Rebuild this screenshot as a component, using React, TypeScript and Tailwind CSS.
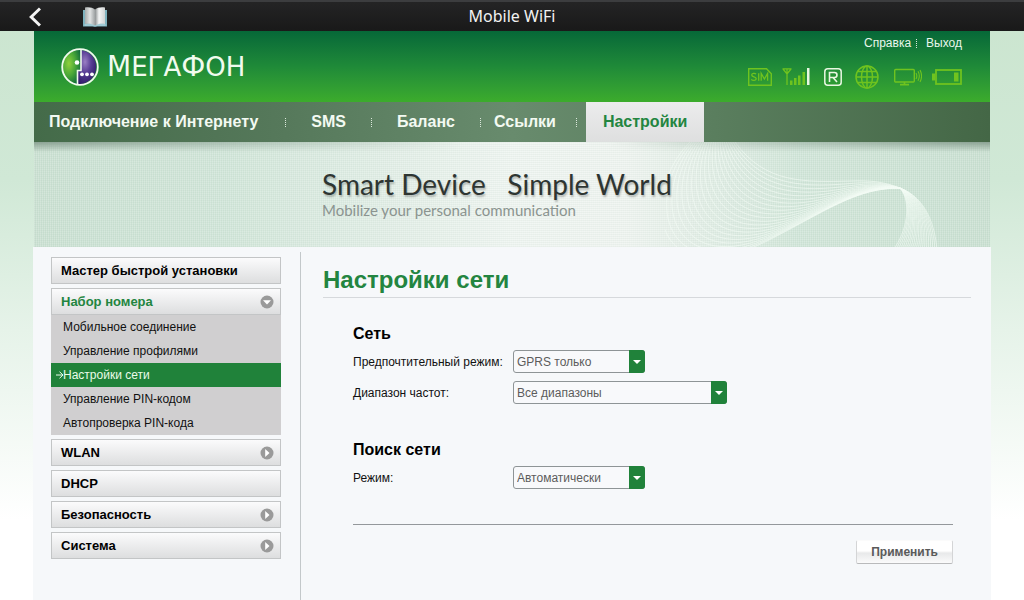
import { useId } from "react";

const sans = "font-['Liberation_Sans',Arial,sans-serif]";

function Separator() {
  return (
    <span
      aria-hidden="true"
      className="h-[9px] w-px bg-[repeating-linear-gradient(to_bottom,#dce8dc_0px,#dce8dc_1px,transparent_1px,transparent_2px)]"
    />
  );
}

function BackIcon() {
  return (
    <svg viewBox="0 0 12 20" className="h-5 w-3" fill="none" stroke="#f4f4f4" strokeWidth="3">
      <path d="M11 1.5 2.2 10 11 18.5" />
    </svg>
  );
}

function BookIcon() {
  return (
    <svg viewBox="0 0 24 20" className="h-5 w-6">
      <defs>
        <linearGradient id="pageLeft" x1="0" x2="1">
          <stop offset="0" stopColor="#a9adad" />
          <stop offset="0.5" stopColor="#e2e4e4" />
          <stop offset="1" stopColor="#9fa3a4" />
        </linearGradient>
        <linearGradient id="pageRight" x1="0" x2="1">
          <stop offset="0" stopColor="#8d9192" />
          <stop offset="0.4" stopColor="#f4f5f5" />
          <stop offset="1" stopColor="#d0d3d3" />
        </linearGradient>
      </defs>
      <path d="M0 3h24v16.500H14.500l-2.500.5-2.500-.5H0z" fill="#7fb3bf" />
      <path d="M1.500 17.500h21v1h-21z" fill="#c4e3ea" />
      <path d="M2 .5c4-.7 7.500 0 10 2v16c-2.500-1.600-6-2-10-1.500z" fill="url(#pageLeft)" />
      <path d="M22 .5c-4-.7-7.500 0-10 2v16c2.500-1.600 6-2 10-1.500z" fill="url(#pageRight)" />
    </svg>
  );
}

function Logo() {
  return (
    <a href="#home" className="flex items-center gap-2 text-[#f1fbee]">
      <svg viewBox="0 0 38 38" className="h-[38px] w-[38px]" aria-hidden="true">
        <defs>
          <radialGradient id="logoGreen" cx="0.35" cy="0.4" r="0.7">
            <stop offset="0" stopColor="#8fd03c" />
            <stop offset="0.5" stopColor="#4aa838" />
            <stop offset="1" stopColor="#0e6a3a" />
          </radialGradient>
          <radialGradient id="logoViolet" cx="0.4" cy="0.35" r="0.7">
            <stop offset="0" stopColor="#9a7fc4" />
            <stop offset="0.45" stopColor="#5a3f96" />
            <stop offset="1" stopColor="#2d1a66" />
          </radialGradient>
        </defs>
        <path d="M20 2A17 17 0 1 0 16.500 36V22.500H20z" fill="url(#logoGreen)" />
        <path d="M20 2A17 17 0 0 1 16.500 36V22.500H20z" fill="url(#logoViolet)" />
        <path d="M20 2v20.500h-3.500V36" fill="none" stroke="#f1fbee" strokeWidth="1.600" />
        <circle cx="19" cy="19" r="17.800" fill="none" stroke="#f1fbee" strokeWidth="1.800" />
        <circle cx="16" cy="14.500" r="2.300" fill="#fff" />
        <circle cx="21" cy="26.300" r="1.900" fill="#fff" />
        <circle cx="26" cy="26.300" r="1.900" fill="#fff" />
        <circle cx="31" cy="26.300" r="1.900" fill="#fff" />
      </svg>
      <span className="font-['DejaVu_Sans',sans-serif] text-[28px] leading-8 uppercase">
        М<span className="text-[26px]">ега</span>Ф<span className="text-[26px]">он</span>
      </span>
    </a>
  );
}

function StatusIcons() {
  return (
    <div className="flex items-center text-[#6fc31f]">
      <svg viewBox="0 0 24 18" className="mr-[10px] h-[18px] w-6" fill="none" stroke="currentColor">
        <path d="M.7.700h17.800l4.800 5v11.600H.7z" strokeWidth="1.400" />
        <path d="M8 6.200C7 5 3.700 5.200 3.700 7c0 2.300 4.500 1.300 4.500 3.700 0 2-3.600 2.200-4.900.6M10.700 5.200v7.600M13.200 12.800V5.500l3.200 5.500 3.200-5.500v7.300" strokeWidth="1.300" />
      </svg>
      <svg viewBox="0 0 28 18" className="mr-[14px] h-[18px] w-7" fill="currentColor">
        <path d="M.5.800h9M5 .8V17M1 1l4 5 4-5" fill="none" stroke="currentColor" strokeWidth="1.300" />
        <path d="M8 12.500h2.500V17H8zM12 10h2.500v7H12zM16 7.500h2.500V17H16zM20.500 4h2.500v13h-2.500z" />
        <path d="M25 0h2.500v17H25z" fill="#e9f7e2" />
      </svg>
      <svg viewBox="0 0 18 18" className="mr-[13px] h-[18px] w-[18px]" fill="none" stroke="#e9f7e2">
        <rect x="0.800" y="0.800" width="16.400" height="16.400" rx="3" strokeWidth="1.500" />
        <path d="M5.500 14V4.500h5c3.300 0 3.300 5 0 5h-5M9 9.500l4 4.500" strokeWidth="1.600" />
      </svg>
      <svg viewBox="0 0 24 24" className="mr-[15px] h-6 w-6" fill="none" stroke="currentColor" strokeWidth="1.500">
        <circle cx="12" cy="12" r="11" />
        <ellipse cx="12" cy="12" rx="5.500" ry="11" />
        <path d="M12 1v22M1 12h22M2.800 6.500h18.400M2.800 17.500h18.400" />
      </svg>
      <svg viewBox="0 0 28 18" className="mr-[10px] h-[18px] w-7" fill="none" stroke="currentColor">
        <rect x="0.700" y="1.500" width="19.600" height="12.500" rx="1" strokeWidth="1.400" />
        <path d="M10.500 14v2.500M6 16.700h9" strokeWidth="1.700" />
        <path d="M22 5c1 1.800 1 4.200 0 6M24 3.300c1.600 2.800 1.600 6.600 0 9.400M26 2c2 3.800 2 8.200 0 12" strokeWidth="1.100" />
      </svg>
      <svg viewBox="0 0 30 16" className="h-4 w-[30px]" fill="none" stroke="currentColor">
        <rect x="4" y="1" width="25" height="14" strokeWidth="1.800" />
        <path d="M0 4.500h3v7H0zM22 3.500h4.500v9H22z" fill="currentColor" stroke="none" />
      </svg>
    </div>
  );
}

const upperCurve = [70, 0, 100, 42, 140, 40, 185, 39, 205, 38, 220, 40, 235, 46, 262, 56, 270, 85, 272, 108];
const lowerCurve = [25, 0, -25, 50, -15, 155, 100, 100, 160, 70, 190, 46, 235, 46, 247, 60, 242, 90, 228, 108];
const ribbon = Array.from({ length: 22 }, (_, i) => {
  const t = i / 21;
  const p = upperCurve.map((v, k) => Math.round((v + (lowerCurve[k] - v) * t) * 10) / 10);
  return `M${p[0]} ${p[1]}C${p.slice(2, 8).join(" ")}C${p.slice(8, 14).join(" ")}C${p.slice(14).join(" ")}`;
});

function Banner() {
  return (
    <section className="relative h-[105px] overflow-hidden bg-[linear-gradient(to_right,#c9e0d1,#d0e5d8_20%,#eff5f1_50%,#eff4f0_62%,#d0e5d8_80%,#c9e0d1)]">
      <div className="absolute inset-0 bg-[repeating-linear-gradient(to_right,rgba(255,255,255,0.2)_0px,rgba(255,255,255,0.2)_1px,transparent_1px,transparent_2px),repeating-linear-gradient(to_bottom,rgba(120,150,130,0.07)_0px,rgba(120,150,130,0.07)_1px,transparent_1px,transparent_2px)]" />
      <svg viewBox="0 0 310 105" className="absolute top-0 right-[15px] h-[105px] w-[310px]" fill="none" stroke="#f4fbf5" strokeOpacity="0.6" strokeWidth="1" aria-hidden="true">
        {ribbon.map((d) => (
          <path key={d} d={d} />
        ))}
      </svg>
      <div className="absolute inset-x-0 top-0 h-[10px] bg-[linear-gradient(to_right,#8aa192,transparent_45%,transparent_60%,#8aa192)] [mask-image:linear-gradient(to_bottom,black,transparent)]" />
      <div className="relative pt-[27px] pl-[288px] font-['Lato','Liberation_Sans',sans-serif]">
        <p className="text-[28px] leading-[30px] whitespace-pre text-[#2e3532] [text-shadow:1px_2px_2px_rgba(0,0,0,0.25)]">Smart Device   Simple World</p>
        <p className="text-[15px] leading-[22px] text-[#8b9490]">Mobilize your personal communication</p>
      </div>
    </section>
  );
}

function Chevron({ open = false }: { open?: boolean }) {
  return (
    <svg viewBox="0 0 14 14" className="h-[14px] w-[14px]" aria-hidden="true">
      <circle cx="7" cy="7" r="6.500" fill="#9a9a9a" />
      <path d={open ? "M3 5.200h8L7 9.500z" : "M5.200 3v8l4.300-4z"} fill="#fff" />
    </svg>
  );
}

function MenuButton({ label, arrow, open }: { label: string; arrow?: boolean; open?: boolean }) {
  return (
    <button
      type="button"
      className={`flex h-[27px] w-full items-center justify-between border border-[#c3c5c6] bg-linear-to-b from-[#fbfbfc] to-[#dddedf] pr-[6px] pl-[9px] text-[13px] leading-4 font-bold ${open ? "text-[#238540]" : "text-black"}`}
    >
      {label}
      {arrow && <Chevron open={open} />}
    </button>
  );
}

const dialItems = [
  "Мобильное соединение",
  "Управление профилями",
  "Настройки сети",
  "Управление PIN-кодом",
  "Автопроверка PIN-кода",
];

function Sidebar() {
  return (
    <nav className="mt-[5px] flex w-[268px] shrink-0 flex-col gap-1 border-r border-[#c3c8ca] pt-[5px] pr-[19px] pl-[18px]">
      <MenuButton label="Мастер быстрой установки" />
      <div>
        <MenuButton label="Набор номера" arrow open />
        <ul className="bg-[#d0cfd0] text-[12px] leading-6">
          {dialItems.map((item) => {
            const active = item === "Настройки сети";
            return (
              <li key={item}>
                <a
                  href="#dial"
                  aria-current={active ? "page" : undefined}
                  className={`relative block pl-3 ${active ? "bg-[#20823a] text-[#eafbe9]" : "text-[#111111]"}`}
                >
                  {active && (
                    <svg viewBox="0 0 8 8" className="absolute top-2 left-[5px] h-2 w-2" fill="none" stroke="currentColor" aria-hidden="true">
                      <path d="M0 4h7M3.500.7 7 4 3.500 7.300" />
                    </svg>
                  )}
                  {item}
                </a>
              </li>
            );
          })}
        </ul>
      </div>
      <MenuButton label="WLAN" arrow />
      <MenuButton label="DHCP" />
      <MenuButton label="Безопасность" arrow />
      <MenuButton label="Система" arrow />
    </nav>
  );
}

function SelectRow({ label, value, wide }: { label: string; value: string; wide?: boolean }) {
  const id = useId();
  return (
    <div className="flex items-center">
      <label htmlFor={id} className="w-40 text-[12px] leading-4 whitespace-nowrap text-[#111111]">
        {label}
      </label>
      <div className={`relative ${wide ? "w-[214px]" : "w-[132px]"}`}>
        <select
          id={id}
          defaultValue={value}
          className="block h-[23px] w-full appearance-none rounded-[3px] border border-[#8e9496] bg-[#f8f9fb] pr-5 pl-[3px] text-[12px] leading-4 text-[#5c5c5c]"
        >
          <option>{value}</option>
        </select>
        <span className="pointer-events-none absolute inset-y-0 right-0 flex w-4 items-center justify-center rounded-r-[3px] bg-[#20823a]">
          <svg viewBox="0 0 8 4" className="h-1 w-2" aria-hidden="true">
            <path d="M0 0h8L4 4z" fill="#fff" />
          </svg>
        </span>
      </div>
    </div>
  );
}

export default function App() {
  return (
    <div className={`flex min-h-screen flex-col bg-[linear-gradient(to_bottom,#cbe5cf,#d0e8d6_180px,#e6f3e9_330px,#ffffff_520px)] ${sans}`}>
      <header className="grid h-[31px] grid-cols-[1fr_auto_1fr] items-center border-t-2 border-[#3c3d3f] bg-linear-to-b from-[#242425] to-[#191919]">
        <div className="flex items-center gap-[42px] pl-[29px]">
          <button type="button" aria-label="Назад"><BackIcon /></button>
          <button type="button" aria-label="Закладки"><BookIcon /></button>
        </div>
        <h1 className="pb-[2px] font-['Noto_Sans',sans-serif] text-[16px] leading-6 text-[#f2f2f2]">Mobile WiFi</h1>
      </header>

      <div className="mx-[34px] flex grow flex-col">
        <div className="flex h-[71px] justify-between bg-linear-to-b from-[#066838] via-[#1f8a38] to-[#3cac2c] pr-7 pl-[27px]">
          <Logo />
          <div className="flex flex-col items-end gap-[14px] pt-1">
            <div className="flex items-center gap-[5px] text-[12px] leading-4 text-[#e9f7ec]">
              <a href="#help">Справка</a>
              <Separator />
              <a href="#logout" className="pl-1">Выход</a>
            </div>
            <StatusIcons />
          </div>
        </div>

        <nav className="flex h-10 items-center bg-[linear-gradient(to_right,#446b49,#55785a_25%,#688b6d_50%,#5b7f5f_70%,#446746)] text-[16px] leading-5 font-bold text-[#f3faf2]">
          <a href="#connect" className="pr-[27px] pl-[15px]">Подключение к Интернету</a>
          <Separator />
          <a href="#sms" className="px-[25px]">SMS</a>
          <Separator />
          <a href="#balance" className="px-[25px]">Баланс</a>
          <Separator />
          <a href="#links" className="pr-5 pl-[13px]">Ссылки</a>
          <Separator />
          <a href="#settings" aria-current="page" className="ml-[9px] flex h-full items-center bg-linear-to-b from-[#ececed] to-[#dedfdf] px-[17px] text-[#238540]">
            Настройки
          </a>
        </nav>

        <Banner />

        <div className="-mx-px flex grow bg-[#f6f8fa]">
          <Sidebar />
          <main className="min-w-0 grow pr-5 pl-[22px]">
            <h2 className="mt-[18px] border-b border-[#d6d9dc] pb-[2px] text-[24px] leading-[30px] font-bold text-[#238540]">Настройки сети</h2>
            <div className="flex flex-col pr-[18px] pl-[30px]">
              <h3 className="mt-[26px] text-[16px] leading-5 font-bold text-black">Сеть</h3>
              <div className="mt-[6px] flex flex-col gap-2">
                <SelectRow label="Предпочтительный режим:" value="GPRS только" />
                <SelectRow label="Диапазон частот:" value="Все диапазоны" wide />
              </div>
              <h3 className="mt-9 text-[16px] leading-5 font-bold text-black">Поиск сети</h3>
              <div className="mt-[6px]">
                <SelectRow label="Режим:" value="Автоматически" />
              </div>
              <div className="mt-[35px] flex justify-end border-t border-[#94989b] pt-[15px]">
                <button
                  type="button"
                  className="h-6 rounded-[2px] border border-t-[#fbfbfb] border-r-[#d4d5d6] border-b-[#b9babb] border-l-[#d4d5d6] bg-[linear-gradient(to_bottom,#ffffff_45%,#e8e9ea_55%,#fbfbfb)] px-[14px] text-[12px] leading-4 font-bold text-[#5a5a5a]"
                >
                  Применить
                </button>
              </div>
            </div>
          </main>
        </div>
      </div>
    </div>
  );
}
